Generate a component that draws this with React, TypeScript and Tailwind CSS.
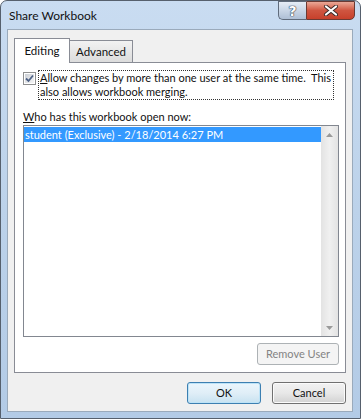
import React from "react";

const font = "font-['Lato','Noto_Sans',sans-serif]";

function CheckBox() {
  return (
    <div className="w-[13px] h-[13px] shrink-0 border border-[#8e8f8f] bg-white p-[1px]">
      <div className="w-full h-full bg-gradient-to-br from-[#cbcfd5] to-[#f6f6f6] flex items-center justify-center">
        <svg width="9" height="9" viewBox="0 0 9 9">
          <path d="M1 4.5 L3.5 7 L8 1.5" stroke="#4d6185" strokeWidth="1.8" fill="none" />
        </svg>
      </div>
    </div>
  );
}

function TitleButtons() {
  return (
    <div className="flex mr-[5px]">
      {/* help */}
      <div className="w-[28px] h-[19px] border border-[#5f6b7b] border-r-0 rounded-bl-[5px] bg-gradient-to-b from-[#e6edf6] via-[#c9d6e6] to-[#aebfd5] flex items-center justify-center">
        <span className="text-white font-bold text-[14px] leading-none font-['DejaVu_Sans',sans-serif] [text-shadow:0_0_1px_#2d3a4c,0_0_1px_#2d3a4c,0_0_1px_#2d3a4c]">
          ?
        </span>
      </div>
      {/* close */}
      <div className="w-[49px] h-[19px] border border-[#6b3a33] rounded-br-[5px] bg-gradient-to-b from-[#e9a897] via-[#cf5540] to-[#c7402b] flex items-center justify-center">
        <svg width="16" height="11" viewBox="0 0 16 11">
          <path d="M3 1.5 L13 9.5 M13 1.5 L3 9.5" stroke="#3b2a28" strokeWidth="4" strokeLinecap="round" />
          <path d="M3 1.5 L13 9.5 M13 1.5 L3 9.5" stroke="#ffffff" strokeWidth="2.2" strokeLinecap="round" />
        </svg>
      </div>
    </div>
  );
}

function Scrollbar() {
  return (
    <div className="w-[17px] h-full flex flex-col bg-gradient-to-r from-[#e3e3e3] via-[#f0f0f0] to-[#e3e3e3]">
      <div className="h-[17px] flex items-center justify-center">
        <svg width="7" height="4" viewBox="0 0 7 4">
          <path d="M0 4 L3.5 0 L7 4 Z" fill="#9a9a9a" />
        </svg>
      </div>
      <div className="flex-1" />
      <div className="h-[17px] flex items-center justify-center">
        <svg width="7" height="4" viewBox="0 0 7 4">
          <path d="M0 0 L3.5 4 L7 0 Z" fill="#9a9a9a" />
        </svg>
      </div>
    </div>
  );
}

export default function App() {
  return (
    <div className={`w-[361px] h-[419px] flex flex-col border border-[#56606d] rounded-t-[7px] overflow-hidden bg-gradient-to-b from-[#c9dcf1] via-[#bcd2ea] to-[#b3cbe6] text-[11px] text-[#111] ${font}`}>
      {/* title bar */}
      <div className="h-[28px] flex justify-between items-start shrink-0">
        <div className="pl-[8px] pt-[7px] leading-[15px] text-[12px]">Share Workbook</div>
        <TitleButtons />
      </div>

      {/* client area */}
      <div className="flex-1 ml-[6px] mr-[7px] mb-[6px] border border-[#9aaabb] bg-[#f0f0f0] flex flex-col pt-[8px] px-[6px]">
        {/* tabs */}
        <div className="flex items-end h-[24px] text-[11.5px]">
          <div className="relative z-10 w-[56px] h-[25px] -mb-px border border-b-0 border-[#898c95] bg-white flex items-center justify-center pb-[1px]">
            Editing
          </div>
          <div className="-ml-px w-[64px] h-[22px] border border-b-0 border-[#898c95] bg-gradient-to-b from-[#f2f2f2] to-[#dcdcdc] flex items-center justify-center">
            Advanced
          </div>
        </div>

        {/* panel */}
        <div className="h-[311px] border border-[#898c95] bg-white pt-[7px] pb-[7px] pl-[8px] pr-[6px] flex flex-col">
          <div className="flex items-start">
            <div className="pt-[2px]">
              <CheckBox />
            </div>
            <div className="ml-[2px] w-[296px] h-[30px] border border-dotted border-[#333] px-[1px] leading-[14px] whitespace-nowrap">
              <span className="underline">A</span>llow changes by more than one user at the same time.&nbsp; This
              <br />
              also allows workbook merging.
            </div>
          </div>

          <div className="mt-[10px] leading-[14px]">
            <span className="underline">W</span>ho has this workbook open now:
          </div>

          <div className="mt-[1px] w-[316px] h-[212px] border border-[#828790] bg-white flex">
            <div className="flex-1 pt-[1px]">
              <div className="h-[15px] bg-[#3399ff] text-white leading-[15px] pl-[1px] whitespace-nowrap">
                student (Exclusive) - 2/18/2014 6:27 PM
              </div>
            </div>
            <Scrollbar />
          </div>

          <div className="mt-[6px] flex justify-end">
            <div className="w-[82px] h-[22px] border border-[#adb2b5] rounded-[3px] bg-[#f4f4f4] text-[#838383] flex items-center justify-center">
              Remove User
            </div>
          </div>
        </div>

        {/* buttons */}
        <div className="mt-[9px] flex justify-end gap-[11px]">
          <div className="w-[74px] h-[22px] rounded-[3px] border border-[#3c7fb1] bg-gradient-to-b from-[#eaf6fd] via-[#e0eef7] to-[#c7e2f1] shadow-[inset_0_0_0_1px_#bde3f7] flex items-center justify-center">
            OK
          </div>
          <div className="w-[74px] h-[22px] rounded-[3px] border border-[#707070] bg-gradient-to-b from-[#f2f2f2] via-[#e8e8e8] to-[#d2d2d2] shadow-[inset_0_0_0_1px_#fbfbfb] flex items-center justify-center">
            Cancel
          </div>
        </div>
      </div>
    </div>
  );
}
